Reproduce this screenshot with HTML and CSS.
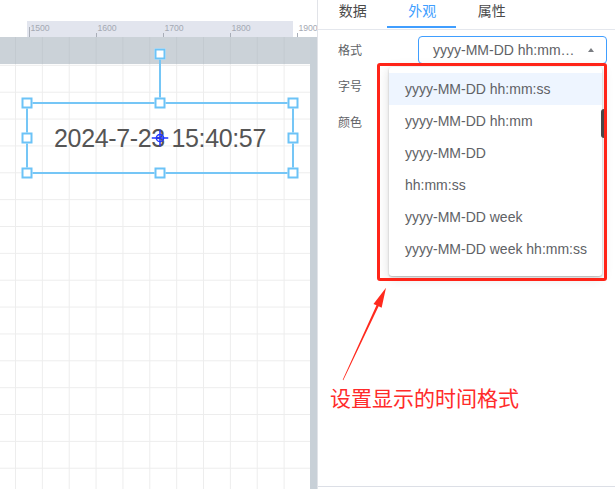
FILE: index.html
```html
<!DOCTYPE html>
<html lang="zh-CN">
<head>
<meta charset="utf-8">
<title>时间组件 - 外观</title>
<link rel="stylesheet" href="styles.css">
</head>
<body>
<div class="app">
  <section class="stage">
    <div class="stage-top"></div>
    <div class="ruler-row">
      <div class="ruler">
        <div class="ruler-scale">
          <span class="tick tick-major">1500</span>
          <span class="tick">1600</span>
          <span class="tick">1700</span>
          <span class="tick">1800</span>
          <span class="tick tick-out">1900</span>
        </div>
      </div>
    </div>
    <div class="workspace">
      <div class="viewport">
        <div class="band"></div>
        <div class="canvas"></div>
        <div class="widget">
          <span class="rotate-line"></span>
          <span class="handle h-rotate"></span>
          <span class="handle h-tl"></span>
          <span class="handle h-tm"></span>
          <span class="handle h-tr"></span>
          <span class="handle h-ml"></span>
          <span class="handle h-mr"></span>
          <span class="handle h-bl"></span>
          <span class="handle h-bm"></span>
          <span class="handle h-br"></span>
          <div class="widget-text">2024-7-23 15:40:57</div>
          <svg class="crosshair" viewBox="0 0 17 17" width="17" height="17">
            <line x1="0" y1="8.5" x2="17" y2="8.5"/>
            <line x1="8.5" y1="0" x2="8.5" y2="17"/>
            <circle cx="8.5" cy="8.5" r="3.6"/>
          </svg>
        </div>
      </div>
      <div class="vscroll"></div>
    </div>
  </section>

  <aside class="panel">
    <nav class="tabs">
      <span class="tab">数据</span>
      <span class="tab active">外观</span>
      <span class="tab">属性</span>
      <span class="ink-bar"></span>
    </nav>
    <div class="form">
      <div class="row">
        <span class="label">格式</span>
        <div class="select">yyyy-MM-DD hh:mm:ss</div>
      </div>
      <div class="row">
        <span class="label">字号</span>
      </div>
      <div class="row">
        <span class="label">颜色</span>
      </div>
    </div>

    <ul class="dropdown">
      <li class="option hover">yyyy-MM-DD hh:mm:ss</li>
      <li class="option">yyyy-MM-DD hh:mm</li>
      <li class="option">yyyy-MM-DD</li>
      <li class="option">hh:mm:ss</li>
      <li class="option">yyyy-MM-DD week</li>
      <li class="option">yyyy-MM-DD week hh:mm:ss</li>
    </ul>
    <span class="scroll-thumb"></span>
    <span class="callout-box"></span>
    <svg class="callout-arrow" viewBox="0 0 298 489" width="298" height="489">
      <polygon points="68,287.7 63.63,307.73 60.64,306.34 25.27,380.13 24.73,379.87 58.46,305.32 55.47,303.93"/>
    </svg>
    <p class="callout-text">设置显示的时间格式</p>

    <div class="panel-foot"></div>
  </aside>
</div>
</body>
</html>
```

FILE: styles.css
```css
* { box-sizing: border-box; }

html, body {
  margin: 0;
  padding: 0;
  width: 615px;
  height: 489px;
  overflow: hidden;
  background: #fff;
}

.app {
  display: flex;
  width: 615px;
  height: 489px;
  font-family: "Liberation Sans", "Noto Sans CJK SC", sans-serif;
}

/* ---------- stage (left) ---------- */
.stage {
  flex: none;
  width: 317px;
  display: flex;
  flex-direction: column;
}

.stage-top { height: 21px; flex: none; }

.ruler-row {
  height: 16px;
  flex: none;
  padding-left: 27px;
}

.ruler {
  width: 266px;
  height: 16px;
  background: #e2e5ee;
}

.ruler-scale {
  display: flex;
  padding-left: 1.7px;
  height: 16px;
}

.tick {
  position: relative;
  flex: none;
  width: 67px;
  height: 16px;
  padding: 3px 0 0 1.7px;
  font-size: 8.7px;
  line-height: 9px;
  color: #a4a9b3;
  white-space: nowrap;
}

.tick::before {
  content: "";
  position: absolute;
  left: 0;
  bottom: 0;
  width: 1px;
  height: 4px;
  background: #a9aeb8;
}

.tick-major::before { height: 10px; }

.tick-out { width: 20px; }

.workspace {
  flex: 1;
  display: flex;
}

.viewport {
  position: relative;
  flex: none;
  width: 310px;
  display: flex;
  flex-direction: column;
}

.band {
  height: 27px;
  flex: none;
  background-color: #cbd2d8;
  background-image: linear-gradient(to right, #c3cad0 1px, transparent 1px);
  background-size: 26.87px 100%;
  background-position: 15px 0;
}

.canvas {
  flex: 1;
  background-color: #fff;
  background-image:
    linear-gradient(to right, #ededed 1px, transparent 1px),
    linear-gradient(to bottom, #ededed 1px, transparent 1px);
  background-size: 26.87px 26.87px;
  background-position: 15px 0.85px;
}

.vscroll {
  flex: none;
  width: 7px;
  background: #c8d0d7;
}

/* selected widget on the free canvas */
.widget {
  position: absolute;
  left: 26px;
  top: 65px;
  width: 268px;
  height: 72px;
  border: 2px solid #75c6f6;
  display: flex;
  align-items: center;
  justify-content: center;
}

.widget-text {
  font-size: 25px;
  letter-spacing: -0.35px;
  color: #555;
  white-space: nowrap;
}

.handle {
  position: absolute;
  width: 11px;
  height: 11px;
  background: #fff;
  border: 2px solid #6cc3f7;
  transform: translate(-50%, -50%);
}

.h-tl { left: -1px; top: -1px; }
.h-tm { left: 50%; top: -1px; }
.h-tr { left: calc(100% + 1px); top: -1px; }
.h-ml { left: -1px; top: 50%; }
.h-mr { left: calc(100% + 1px); top: 50%; }
.h-bl { left: -1px; top: calc(100% + 1px); }
.h-bm { left: 50%; top: calc(100% + 1px); }
.h-br { left: calc(100% + 1px); top: calc(100% + 1px); }
.h-rotate { left: 50%; top: -50px; }

.rotate-line {
  position: absolute;
  left: calc(50% - 1px);
  top: -45px;
  width: 2px;
  height: 43px;
  background: #75c6f6;
}

.crosshair {
  position: absolute;
  left: 50%;
  top: 50%;
  transform: translate(-50%, -50%);
  fill: none;
  stroke: #1f35ff;
  stroke-width: 1.5;
}

/* ---------- panel (right) ---------- */
.panel {
  position: relative;
  flex: 1;
  min-width: 0;
  display: flex;
  flex-direction: column;
  border-left: 1px solid #e1e3e8;
}

.tabs {
  position: relative;
  display: flex;
  height: 30px;
  flex: none;
  border-bottom: 1px solid #e4e7ed;
}

.tab {
  flex: none;
  width: 69.5px;
  text-align: center;
  font-family: "Noto Sans CJK SC", sans-serif;
  font-size: 14px;
  line-height: 20px;
  color: #4a4a4a;
}

.tab.active { color: #409eff; }

.ink-bar {
  position: absolute;
  left: 69px;
  top: 26px;
  width: 69px;
  height: 2px;
  background: #409eff;
}

.form {
  padding-top: 6px;
}

.row {
  display: flex;
  align-items: center;
  height: 28px;
  margin-bottom: 8px;
  padding-right: 8px;
}

.label {
  width: 100px;
  flex: none;
  padding-left: 20px;
  font-family: "Noto Sans CJK SC", sans-serif;
  font-size: 12px;
  line-height: 28px;
  color: #606266;
}

.select {
  position: relative;
  flex: 1;
  min-width: 0;
  height: 28px;
  border: 1px solid #409eff;
  border-radius: 4px;
  padding: 0 31px 0 14px;
  font-size: 14px;
  line-height: 26px;
  color: #606266;
  white-space: nowrap;
  overflow: hidden;
  text-overflow: ellipsis;
}

.select::after {
  content: "";
  position: absolute;
  right: 12px;
  top: 11px;
  border-left: 3.5px solid transparent;
  border-right: 3.5px solid transparent;
  border-bottom: 4px solid #7a7d82;
}

.dropdown {
  position: absolute;
  left: 71px;
  top: 67px;
  width: 213px;
  margin: 0;
  padding: 6px 0 11px;
  list-style: none;
  background: #fff;
  border-radius: 3px;
  box-shadow: 0 2px 12px rgba(0, 0, 0, 0.14), 0 1px 2px rgba(0, 0, 0, 0.25);
}

.option {
  height: 32px;
  line-height: 32px;
  padding-left: 16px;
  font-size: 14px;
  color: #606266;
  white-space: nowrap;
}

.option.hover { background: #eef5ff; }

.scroll-thumb {
  position: absolute;
  left: 283px;
  top: 109px;
  width: 6px;
  height: 29px;
  border-radius: 3px;
  background: #484848;
}

.callout-box {
  position: absolute;
  left: 59px;
  top: 63px;
  width: 230px;
  height: 218px;
  border: 3px solid #ff2418;
  border-radius: 3px;
}

.callout-arrow {
  position: absolute;
  left: 0;
  top: 0;
  fill: #ff2a1e;
  pointer-events: none;
}

.callout-text {
  position: absolute;
  left: 12px;
  top: 387px;
  margin: 0;
  font-family: "Noto Sans CJK SC", sans-serif;
  font-size: 21px;
  line-height: 21px;
  color: #ff2b2b;
  white-space: nowrap;
}

.panel-foot {
  margin-top: auto;
  height: 3px;
  flex: none;
  border-top: 1px solid #dcdfe6;
}
```
